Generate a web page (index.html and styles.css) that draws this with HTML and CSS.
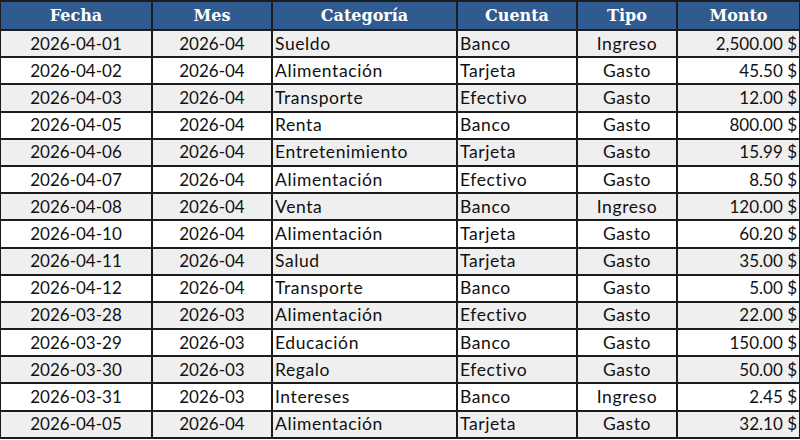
FILE: index.html
```html
<!DOCTYPE html>
<html lang="es">
<head>
<meta charset="utf-8">
<link rel="stylesheet" href="styles.css">
</head>
<body>
<table class="sheet">
  <colgroup>
    <col class="c-fecha"><col class="c-mes"><col class="c-cat"><col class="c-cta"><col class="c-tipo"><col class="c-monto">
  </colgroup>
  <thead>
    <tr><th>Fecha</th><th>Mes</th><th>Categoría</th><th>Cuenta</th><th>Tipo</th><th>Monto</th></tr>
  </thead>
  <tbody>
    <tr><td class="ctr">2026-04-01</td><td class="ctr">2026-04</td><td class="txt">Sueldo</td><td class="txt">Banco</td><td class="ctr txt">Ingreso</td><td class="num">2,500.00 $</td></tr>
    <tr><td class="ctr">2026-04-02</td><td class="ctr">2026-04</td><td class="txt">Alimentación</td><td class="txt">Tarjeta</td><td class="ctr txt">Gasto</td><td class="num">45.50 $</td></tr>
    <tr><td class="ctr">2026-04-03</td><td class="ctr">2026-04</td><td class="txt">Transporte</td><td class="txt">Efectivo</td><td class="ctr txt">Gasto</td><td class="num">12.00 $</td></tr>
    <tr><td class="ctr">2026-04-05</td><td class="ctr">2026-04</td><td class="txt">Renta</td><td class="txt">Banco</td><td class="ctr txt">Gasto</td><td class="num">800.00 $</td></tr>
    <tr><td class="ctr">2026-04-06</td><td class="ctr">2026-04</td><td class="txt">Entretenimiento</td><td class="txt">Tarjeta</td><td class="ctr txt">Gasto</td><td class="num">15.99 $</td></tr>
    <tr><td class="ctr">2026-04-07</td><td class="ctr">2026-04</td><td class="txt">Alimentación</td><td class="txt">Efectivo</td><td class="ctr txt">Gasto</td><td class="num">8.50 $</td></tr>
    <tr><td class="ctr">2026-04-08</td><td class="ctr">2026-04</td><td class="txt">Venta</td><td class="txt">Banco</td><td class="ctr txt">Ingreso</td><td class="num">120.00 $</td></tr>
    <tr><td class="ctr">2026-04-10</td><td class="ctr">2026-04</td><td class="txt">Alimentación</td><td class="txt">Tarjeta</td><td class="ctr txt">Gasto</td><td class="num">60.20 $</td></tr>
    <tr><td class="ctr">2026-04-11</td><td class="ctr">2026-04</td><td class="txt">Salud</td><td class="txt">Tarjeta</td><td class="ctr txt">Gasto</td><td class="num">35.00 $</td></tr>
    <tr><td class="ctr">2026-04-12</td><td class="ctr">2026-04</td><td class="txt">Transporte</td><td class="txt">Banco</td><td class="ctr txt">Gasto</td><td class="num">5.00 $</td></tr>
    <tr><td class="ctr">2026-03-28</td><td class="ctr">2026-03</td><td class="txt">Alimentación</td><td class="txt">Efectivo</td><td class="ctr txt">Gasto</td><td class="num">22.00 $</td></tr>
    <tr><td class="ctr">2026-03-29</td><td class="ctr">2026-03</td><td class="txt">Educación</td><td class="txt">Banco</td><td class="ctr txt">Gasto</td><td class="num">150.00 $</td></tr>
    <tr><td class="ctr">2026-03-30</td><td class="ctr">2026-03</td><td class="txt">Regalo</td><td class="txt">Efectivo</td><td class="ctr txt">Gasto</td><td class="num">50.00 $</td></tr>
    <tr><td class="ctr">2026-03-31</td><td class="ctr">2026-03</td><td class="txt">Intereses</td><td class="txt">Banco</td><td class="ctr txt">Ingreso</td><td class="num">2.45 $</td></tr>
    <tr><td class="ctr">2026-04-05</td><td class="ctr">2026-04</td><td class="txt">Alimentación</td><td class="txt">Tarjeta</td><td class="ctr txt">Gasto</td><td class="num">32.10 $</td></tr>
  </tbody>
</table>
</body>
</html>
```

FILE: styles.css
```css
html, body {
  margin: 0;
  padding: 0;
  background: #ffffff;
}
body {
  overflow: hidden;
}
.sheet {
  border-collapse: collapse;
  table-layout: fixed;
  width: 800px;
  margin-left: -1px;
  font-family: Lato, "Open Sans", sans-serif;
  font-size: 17px;
  color: #111111;
}
.c-fecha { width: 152px; }
.c-mes { width: 120px; }
.c-cat { width: 185px; }
.c-cta { width: 120px; }
.c-tipo { width: 100px; }
.c-monto { width: 123px; }
.sheet th,
.sheet td {
  border: 2px solid #1c1c1c;
  padding: 0 2px;
  white-space: nowrap;
  overflow: hidden;
  line-height: 20px;
}
.sheet th {
  height: 27px;
  background: #2f5b91;
  color: #ffffff;
  font-family: "DejaVu Serif", "Liberation Serif", serif;
  font-weight: bold;
  font-size: 16px;
  text-align: center;
}
.sheet td {
  height: 25.2px;
  text-align: left;
}
.sheet td.txt {
  font-size: 17.5px;
  letter-spacing: 0.6px;
}
.sheet tbody tr:nth-child(odd) td {
  background: #efefef;
}
.sheet td.ctr { text-align: center; }
.sheet td.num { text-align: right; padding-right: 2px; }
```
